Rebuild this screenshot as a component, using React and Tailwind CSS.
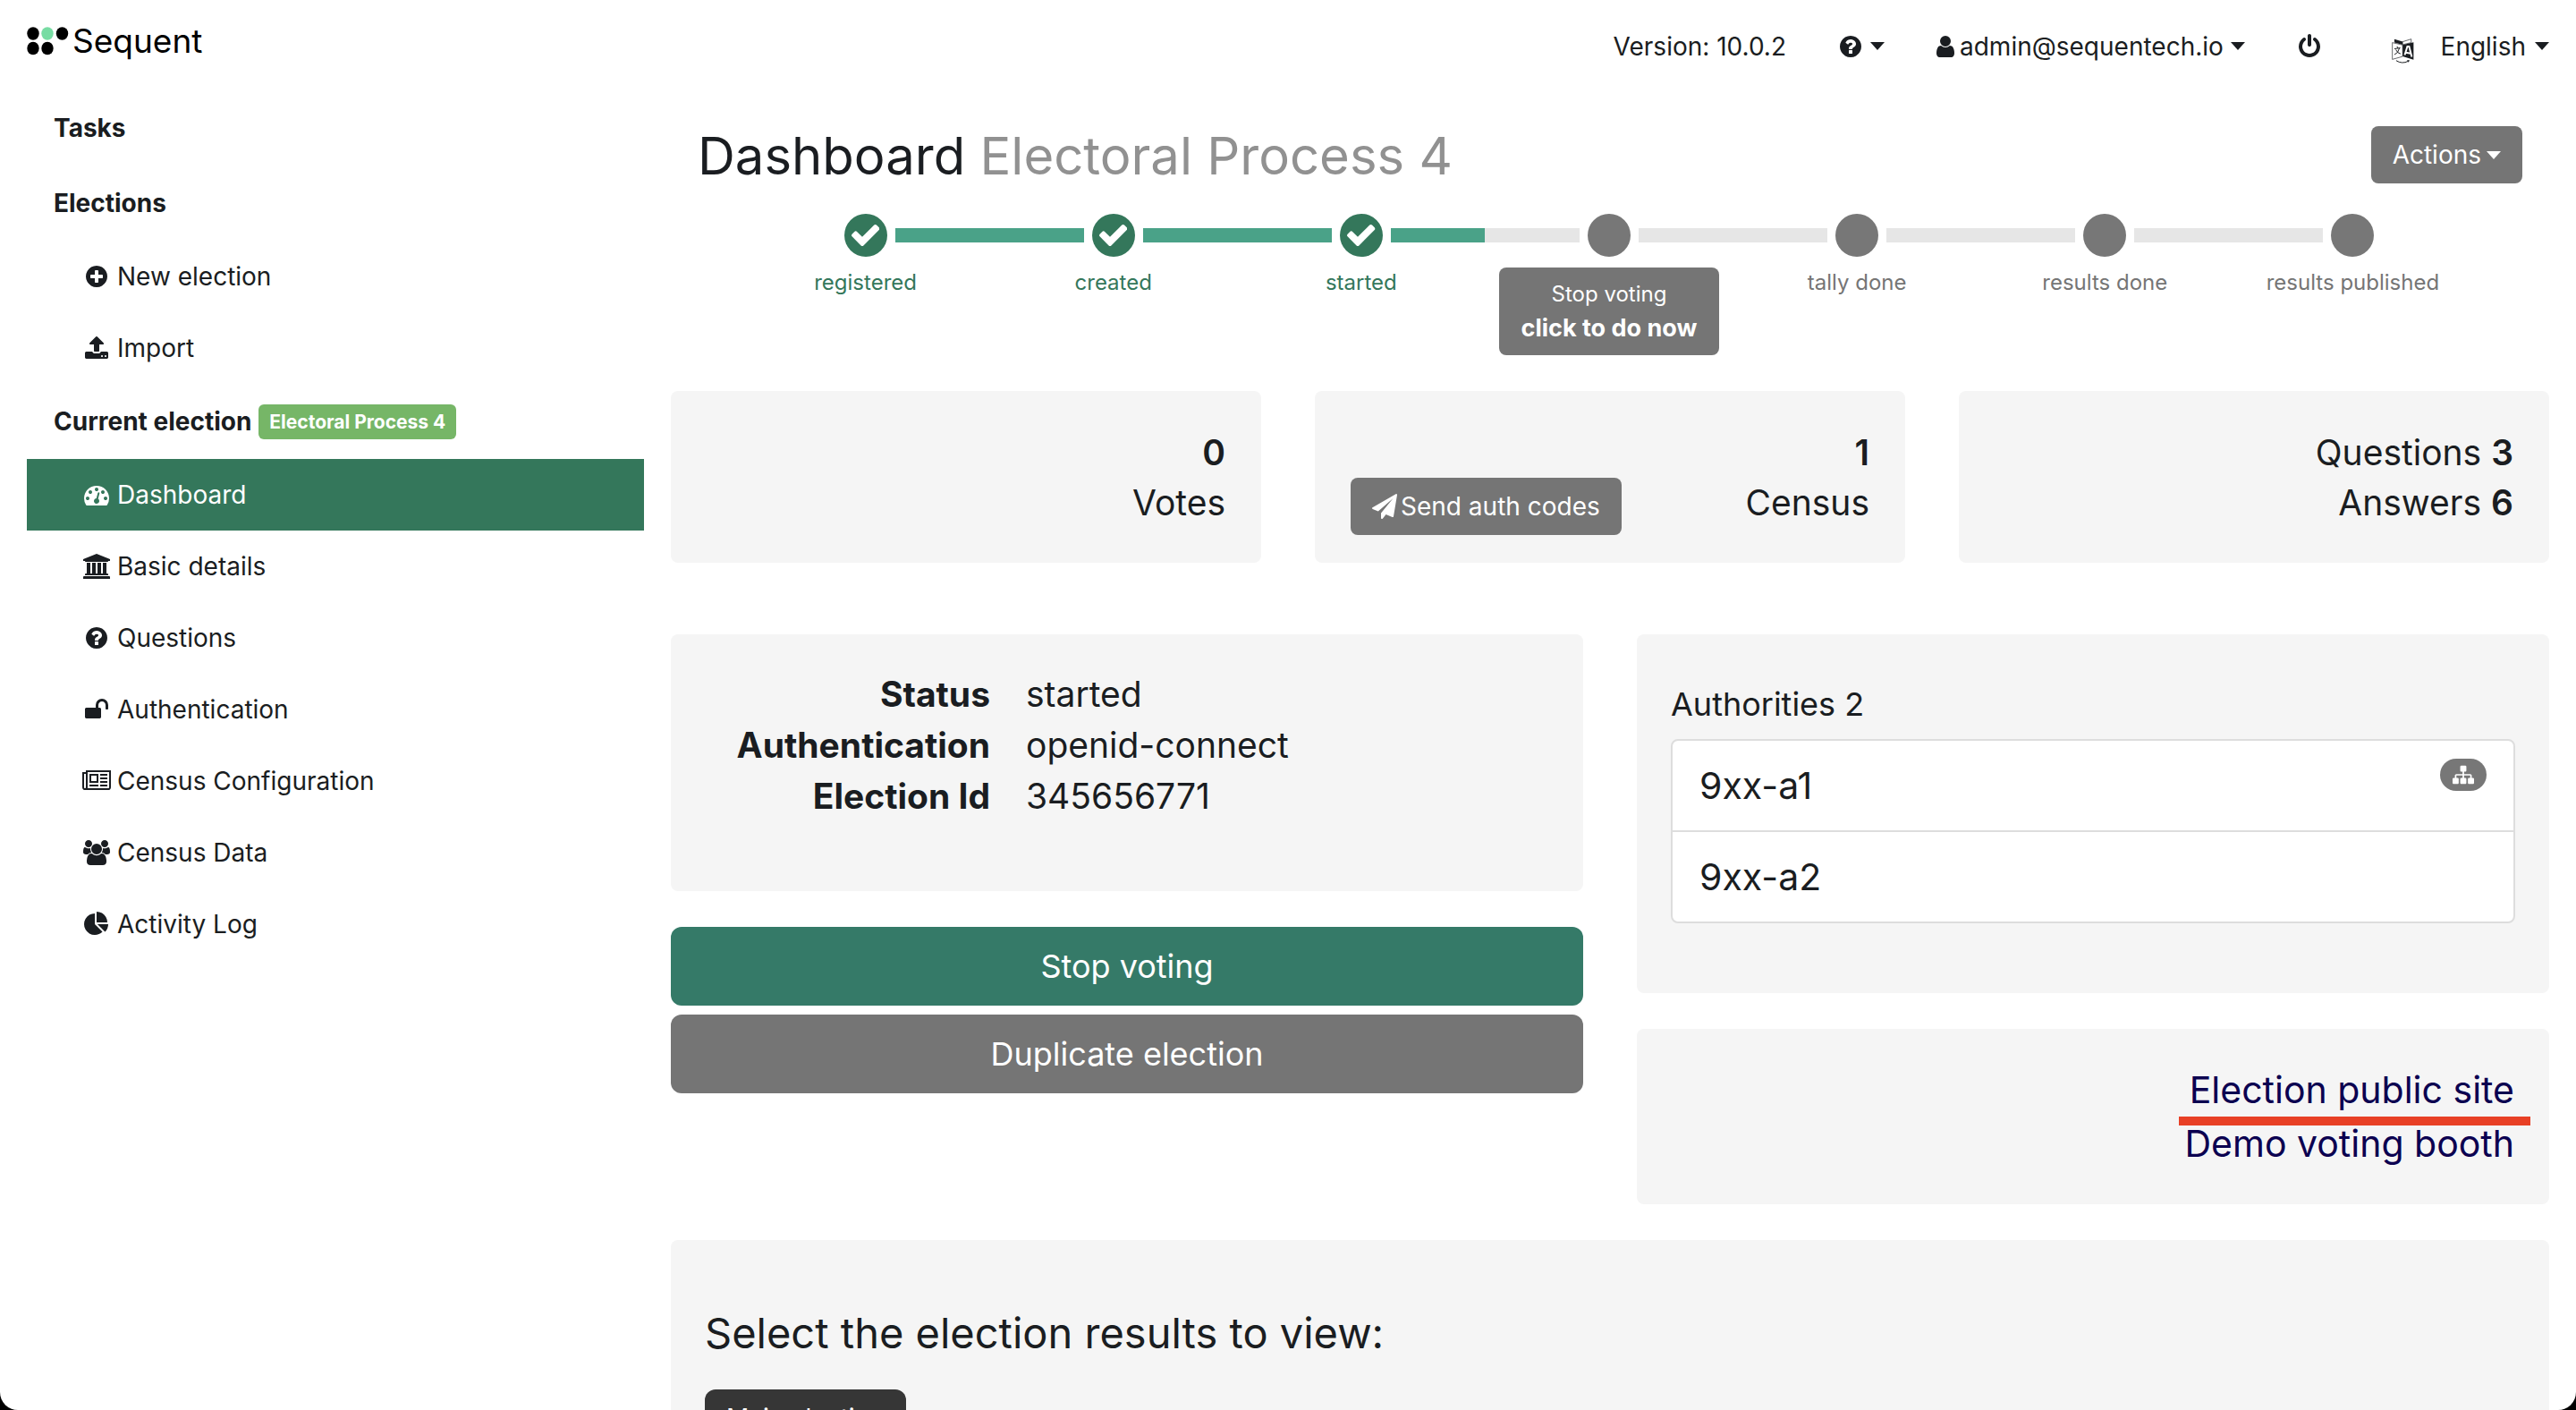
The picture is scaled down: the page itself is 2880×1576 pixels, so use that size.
import React from "react";

const ICONS = {
  plus: ["0 0 1792 1792", "M1344 960v-128q0-26-19-45t-45-19h-256v-256q0-26-19-45t-45-19h-128q-26 0-45 19t-19 45v256h-256q-26 0-45 19t-19 45v128q0 26 19 45t45 19h256v256q0 26 19 45t45 19h128q26 0 45-19t19-45v-256h256q26 0 45-19t19-45zm320-64q0 209-103 385.5t-279.5 279.5-385.5 103-385.5-103-279.5-279.5-103-385.5 103-385.5 279.5-279.5 385.5-103 385.5 103 279.5 279.5 103 385.5z"],
  upload: ["0 0 1792 1792", "M1344 1472q0-26-19-45t-45-19-45 19-19 45 19 45 45 19 45-19 19-45zm256 0q0-26-19-45t-45-19-45 19-19 45 19 45 45 19 45-19 19-45zm128-224v320q0 40-28 68t-68 28h-1472q-40 0-68-28t-28-68v-320q0-40 28-68t68-28h427q21 56 70.5 92t110.5 36h256q61 0 110.5-36t70.5-92h427q40 0 68 28t28 68zm-325-648q-17 40-59 40h-256v448q0 26-19 45t-45 19h-256q-26 0-45-19t-19-45v-448h-256q-42 0-59-40-17-39 14-69l448-448q18-19 45-19t45 19l448 448q31 30 14 69z"],
  gauge: ["0 0 1792 1792", "M384 1152q0-53-37.5-90.5t-90.5-37.5-90.5 37.5-37.5 90.5 37.5 90.5 90.5 37.5 90.5-37.5 37.5-90.5zm192-448q0-53-37.5-90.5t-90.5-37.5-90.5 37.5-37.5 90.5 37.5 90.5 90.5 37.5 90.5-37.5 37.5-90.5zm428 481l101-382q6-26-7.5-48.5t-38.5-29.5-48 6.5-30 39.5l-101 382q-60 5-107 43.5t-63 98.5q-20 77 20 146t117 89 146-20 89-117q16-60-6-117t-72-91zm660-33q0-53-37.5-90.5t-90.5-37.5-90.5 37.5-37.5 90.5 37.5 90.5 90.5 37.5 90.5-37.5 37.5-90.5zm-640-640q0-53-37.5-90.5t-90.5-37.5-90.5 37.5-37.5 90.5 37.5 90.5 90.5 37.5 90.5-37.5 37.5-90.5zm448 192q0-53-37.5-90.5t-90.5-37.5-90.5 37.5-37.5 90.5 37.5 90.5 90.5 37.5 90.5-37.5 37.5-90.5zm320 448q0 261-141 483-19 29-54 29h-1402q-35 0-54-29-141-221-141-483 0-182 71-348t191-286 286-191 348-71 348 71 286 191 191 286 71 348z"],
  bank: ["0 0 1920 1792", "M960 0l960 384v128h-128q0 26-20.5 45t-48.5 19h-1526q-28 0-48.5-19t-20.5-45h-128v-128zm-704 640h256v768h128v-768h256v768h128v-768h256v768h128v-768h256v768h59q28 0 48.5 19t20.5 45v64h-1664v-64q0-26 20.5-45t48.5-19h59v-768zm1595 960q28 0 48.5 19t20.5 45v128h-1920v-128q0-26 20.5-45t48.5-19h1782z"],
  question: ["0 0 1792 1792", "M1024 1376v-192q0-14-9-23t-23-9h-192q-14 0-23 9t-9 23v192q0 14 9 23t23 9h192q14 0 23-9t9-23zm256-672q0-88-55.5-163t-138.5-116-170-41q-243 0-371 213-15 24 8 42l132 100q7 6 19 6 16 0 25-12 53-68 86-92 34-24 86-24 48 0 85.5 26t37.5 59q0 38-20 61t-68 45q-63 28-115.5 86.5t-52.5 125.5v36q0 14 9 23t23 9h192q14 0 23-9t9-23q0-19 21.5-49.5t54.5-49.5q32-18 49-28.5t46-35 44.5-48 28-60.5 12.5-81zm384 192q0 209-103 385.5t-279.5 279.5-385.5 103-385.5-103-279.5-279.5-103-385.5 103-385.5 279.5-279.5 385.5-103 385.5 103 279.5 279.5 103 385.5z"],
  unlock: ["0 0 1792 1792", "M1728 576v256q0 26-19 45t-45 19h-64q-26 0-45-19t-19-45v-256q0-106-75-181t-181-75-181 75-75 181v192h96q40 0 68 28t28 68v576q0 40-28 68t-68 28h-960q-40 0-68-28t-28-68v-576q0-40 28-68t68-28h672v-192q0-185 131.5-316.5t316.5-131.5 316.5 131.5 131.5 316.5z"],
  news: ["0 0 2048 1792", "M1024 512h-384v384h384v-384zm128 640v128h-640v-128h640zm0-768v640h-640v-640h640zm640 768v128h-512v-128h512zm0-256v128h-512v-128h512zm0-256v128h-512v-128h512zm0-256v128h-512v-128h512zm-1536 960v-960h-128v960q0 26 19 45t45 19 45-19 19-45zm1664 0v-1088h-1536v1088q0 33-11 64h1483q26 0 45-19t19-45zm128-1216v1216q0 80-56 136t-136 56h-1664q-80 0-136-56t-56-136v-1088h256v-128h1792z"],
  users: ["64 0 1920 1792", "M657 896q-162 5-265 128h-134q-82 0-138-40.5t-56-118.5q0-353 124-353 6 0 43.5 21t97.5 42.5 119 21.5q67 0 133-23-5 37-5 66 0 139 81 256zm1071 637q0 120-73 189.5t-194 69.5h-874q-121 0-194-69.5t-73-189.5q0-53 3.5-103.5t14-109 26.5-108.5 43-97.5 62-81 85.5-53.5 111.5-20q10 0 43 21.5t73 48 107 48 135 21.5 135-21.5 107-48 73-48 43-21.5q61 0 111.5 20t85.5 53.5 62 81 43 97.5 26.5 108.5 14 109 3.5 103.5zm-1024-1277q0 106-75 181t-181 75-181-75-75-181 75-181 181-75 181 75 75 181zm704 384q0 159-112.5 271.5t-271.5 112.5-271.5-112.5-112.5-271.5 112.5-271.5 271.5-112.5 271.5 112.5 112.5 271.5zm576 225q0 78-56 118.5t-138 40.5h-134q-103-123-265-128 81-117 81-256 0-29-5-66 66 23 133 23 59 0 119-21.5t97.5-42.5 43.5-21q124 0 124 353zm-128-609q0 106-75 181t-181 75-181-75-75-181 75-181 181-75 181 75 75 181z"],
  pie: ["0 0 1792 1792", "M768 890l546 546q-106 108-247.5 168t-298.5 60q-209 0-385.5-103t-279.5-279.5-103-385.5 103-385.5 279.5-279.5 385.5-103v762zm187 6h773q0 157-60 298.5t-168 247.5zm709-128h-768v-768q209 0 385.5 103t279.5 279.5 103 385.5z"],
  user: ["256 0 1280 1792", "M1536 1399q0 109-62.5 187t-150.5 78h-854q-88 0-150.5-78t-62.5-187q0-85 8.5-160.5t31.5-152 58.5-131 94-89 134.5-34.5q131 128 313 128t313-128q76 0 134.5 34.5t94 89 58.5 131 31.5 152 8.5 160.5zm-256-887q0 159-112.5 271.5t-271.5 112.5-271.5-112.5-112.5-271.5 112.5-271.5 271.5-112.5 271.5 112.5 112.5 271.5z"],
  power: ["128 0 1536 1792", "M1664 896q0 156-61 298t-164 245-245 164-298 61-298-61-245-164-164-245-61-298q0-182 80.5-343t226.5-270q43-32 95.5-25t83.5 50q32 42 24.5 94.5t-49.5 84.5q-98 74-151.5 181t-53.5 228q0 104 40.5 198.5t109.5 163.5 163.5 109.5 198.5 40.5 198.5-40.5 163.5-109.5 109.5-163.5 40.5-198.5q0-121-53.5-228t-151.5-181q-42-32-49.5-84.5t24.5-94.5q31-43 84-50t95 25q146 109 226.5 270t80.5 343zm-640-768v640q0 52-38 90t-90 38-90-38-38-90v-640q0-52 38-90t90-38 90 38 38 90z"],
  plane: ["0 0 1792 1792", "M1764 11q33 24 27 64l-256 1536q-5 29-32 45-14 8-31 8-11 0-24-5l-453-185-242 295q-18 23-49 23-13 0-22-4-19-7-30.5-23.5t-11.5-36.5v-349l864-1059-1069 925-395-162q-37-14-40-55-2-40 32-59l1664-960q15-9 32-9 20 0 36 11z"],
  sitemap: ["0 0 1792 1792", "M1792 1248v320q0 40-28 68t-68 28h-320q-40 0-68-28t-28-68v-320q0-40 28-68t68-28h96v-192h-512v192h96q40 0 68 28t28 68v320q0 40-28 68t-68 28h-320q-40 0-68-28t-28-68v-320q0-40 28-68t68-28h96v-192h-512v192h96q40 0 68 28t28 68v320q0 40-28 68t-68 28h-320q-40 0-68-28t-28-68v-320q0-40 28-68t68-28h96v-192q0-52 38-90t90-38h512v-192h-96q-40 0-68-28t-28-68v-320q0-40 28-68t68-28h320q40 0 68 28t28 68v320q0 40-28 68t-68 28h-96v192h512q52 0 90 38t38 90v192h96q40 0 68 28t28 68z"],
  check: ["121 334 1550 1188", "M1671 566q0 40-28 68l-724 724-136 136q-28 28-68 28t-68-28l-136-136-362-362q-28-28-28-68t28-68l136-136q28-28 68-28t68 28l294 295 656-657q28-28 68-28t68 28l136 136q28 28 28 68z"],
};

function Icon({ name, className = "h-7" }) {
  const [viewBox, d] = ICONS[name];
  return (
    <svg viewBox={viewBox} className={`w-auto shrink-0 ${className}`} fill="currentColor" aria-hidden="true">
      <path d={d} />
    </svg>
  );
}

function Caret() {
  return (
    <svg viewBox="0 0 16 9" className="h-[9px] w-4 shrink-0" fill="currentColor" aria-hidden="true">
      <path d="M0 0h16L8 9z" />
    </svg>
  );
}

function TranslateIcon() {
  return (
    <svg viewBox="0 0 75 85" className="h-7 w-auto" aria-hidden="true">
      <path d="M9 2l28 9v10L9 14z" fill="#1a1d21" />
      <path d="M37 11l29-9v12L37 21z" fill="#fff" stroke="#1a1d21" strokeWidth="2" />
      <path d="M2 14l35 8v39L2 71z" fill="#fff" stroke="#1a1d21" strokeWidth="2" />
      <path d="M37 22l37-9v59l-37-11z" fill="#1a1d21" />
      <path d="M9 35l20-3M18 27l3 6M26 33q-4 17-17 22M14 38q5 12 16 14" fill="none" stroke="#1a1d21" strokeWidth="3" />
      <path d="M44 56l9-29h6l9 35M47 48l18 3" fill="none" stroke="#fff" strokeWidth="6" />
      <path d="M15 75q20 13 41 2" fill="none" stroke="#1a1d21" strokeWidth="3" />
      <path d="M52 73l9 1-5 7z" fill="#1a1d21" />
    </svg>
  );
}

function Logo() {
  return (
    <a href="#" className="flex items-center gap-1 text-[37px] leading-[48px] text-black">
      <svg viewBox="0 0 47 32" className="h-8 w-auto" aria-hidden="true">
        <ellipse cx="7" cy="7.5" rx="6.7" ry="7.3" />
        <ellipse cx="23" cy="7.5" rx="6.7" ry="7.3" fill="#77dca3" />
        <ellipse cx="39.5" cy="7.5" rx="6.7" ry="7.3" />
        <ellipse cx="7" cy="24" rx="6.7" ry="7.3" />
        <ellipse cx="23" cy="24" rx="6.7" ry="7.3" />
      </svg>
      Sequent
    </a>
  );
}

function NavItem({ icon, label, active }) {
  return (
    <a
      href="#"
      aria-current={active ? "page" : undefined}
      className={`flex h-20 items-center gap-[5px] pl-15 ${active ? "bg-[#34775b] text-white" : ""}`}
    >
      <span className="flex w-9 justify-center">
        <Icon name={icon} />
      </span>
      {label}
    </a>
  );
}

const CURRENT = [
  ["gauge", "Dashboard"],
  ["bank", "Basic details"],
  ["question", "Questions"],
  ["unlock", "Authentication"],
  ["news", "Census Configuration"],
  ["users", "Census Data"],
  ["pie", "Activity Log"],
];

function Sidebar() {
  return (
    <nav className="flex w-[690px] shrink-0 flex-col">
      <h2 className="flex h-21 items-center pl-[30px] font-bold">Tasks</h2>
      <h2 className="flex h-21 items-center pl-[30px] font-bold">Elections</h2>
      <NavItem icon="plus" label="New election" />
      <NavItem icon="upload" label="Import" />
      <h2 className="flex h-21 items-center gap-2 pl-[30px] font-bold">
        Current election
        <span className="rounded-md bg-[#76b667] px-3 text-[21px] leading-[39px] text-white">Electoral Process 4</span>
      </h2>
      {CURRENT.map(([icon, label]) => (
        <NavItem key={label} icon={icon} label={label} active={label === "Dashboard"} />
      ))}
    </nav>
  );
}

const STEPS = [
  ["registered", true],
  ["created", true],
  ["started", true],
  ["", false],
  ["tally done", false],
  ["results done", false],
  ["results published", false],
];

function Steps() {
  return (
    <ol className="mr-[81px] ml-[79px] mt-[34px] grid grid-cols-7">
      {STEPS.map(([label, done], i) => (
        <li key={i} className="flex flex-col items-center">
          <div className="flex w-full items-center gap-[9px]">
            <span className={`h-4 flex-1 ${i === 0 ? "" : done ? "bg-[#4aa288]" : "bg-[#e6e6e6]"}`} />
            <span className={`flex size-12 items-center justify-center rounded-full text-white ${done ? "bg-[#34775b]" : "bg-[#777777]"}`}>
              {done && <Icon name="check" className="h-6" />}
            </span>
            <span className={`h-4 flex-1 ${i === 6 ? "" : done ? "bg-[#4aa288]" : "bg-[#e6e6e6]"}`} />
          </div>
          {label ? (
            <span className={`mt-[13px] text-[24px] leading-8 whitespace-nowrap ${done ? "text-[#34775b]" : "text-[#757575]"}`}>{label}</span>
          ) : (
            <button className="mt-3 flex h-[98px] flex-col items-center justify-center rounded-lg bg-[#757575] px-[25px] leading-[38px] whitespace-nowrap text-white">
              <span className="text-[24px]">Stop voting</span>
              <strong className="text-[27px]">click to do now</strong>
            </button>
          )}
        </li>
      ))}
    </ol>
  );
}

export default function App() {
  return (
    <div className="h-screen overflow-hidden bg-black">
      <div className="h-full overflow-hidden rounded-b-[20px] bg-white px-[30px] font-['Inter',sans-serif] text-[28px] leading-10 text-[#1a1d21]">
        <header className="flex h-[101px] justify-between">
          <div className="pt-[22px]">
            <Logo />
          </div>
          <div className="flex items-center pt-0.5">
            <span>Version: 10.0.2</span>
            <button aria-label="Help" className="ml-[58px] flex items-center gap-2">
              <Icon name="question" />
              <Caret />
            </button>
            <button className="ml-[58px] flex items-center gap-1.5">
              <Icon name="user" />
              admin@sequentech.io
              <span className="ml-0.5"><Caret /></span>
            </button>
            <button aria-label="Log out" className="ml-[60px]">
              <Icon name="power" />
            </button>
            <button className="ml-20 flex items-center">
              <span className="mt-2.5"><TranslateIcon /></span>
              <span className="ml-[30px]">English</span>
              <span className="ml-2.5"><Caret /></span>
            </button>
          </div>
        </header>

        <div className="flex gap-[30px]">
          <Sidebar />
          <main className="min-w-0 flex-1 pt-10">
            <div className="flex items-center justify-between px-[30px]">
              <h1 className="pt-0.5 text-[58px] leading-[62px]">
                Dashboard <span className="text-[#919191]">Electoral Process 4</span>
              </h1>
              <button className="flex h-16 items-center gap-1.5 rounded-lg bg-[#757575] px-6 text-white">
                Actions <Caret />
              </button>
            </div>

            <Steps />

            <section className="mt-10 grid grid-cols-3 gap-15 text-right text-[39px] leading-14">
              <div className="rounded-lg bg-[#f5f5f5] px-10 pt-[41px] pb-[39px]">
                <strong className="block font-semibold">0</strong>
                Votes
              </div>
              <div className="flex items-end justify-between rounded-lg bg-[#f5f5f5] px-10 pt-[41px] pb-[39px]">
                <button className="-mb-2 flex h-16 items-center gap-1 rounded-lg bg-[#757575] px-6 text-[28px] leading-10 text-white">
                  <Icon name="plane" /> Send auth codes
                </button>
                <div>
                  <strong className="block font-semibold">1</strong>
                  Census
                </div>
              </div>
              <div className="rounded-lg bg-[#f5f5f5] px-10 pt-[41px] pb-[39px]">
                <div>Questions <strong className="font-semibold">3</strong></div>
                <div>Answers <strong className="font-semibold">6</strong></div>
              </div>
            </section>

            <div className="mt-20 grid grid-cols-2 items-start gap-15">
              <section>
                <dl className="grid grid-cols-[35%_1fr] gap-x-10 rounded-lg bg-[#f5f5f5] pt-[38px] pb-[78px] text-[39px] leading-[57px]">
                  <dt className="text-right font-bold">Status</dt>
                  <dd>started</dd>
                  <dt className="text-right font-bold">Authentication</dt>
                  <dd>openid-connect</dd>
                  <dt className="text-right font-bold">Election Id</dt>
                  <dd>345656771</dd>
                </dl>
                <button className="mt-10 h-22 w-full rounded-xl bg-[#357a68] text-[36px] text-white">Stop voting</button>
                <button className="mt-2.5 h-22 w-full rounded-xl bg-[#757575] text-[36px] text-white">Duplicate election</button>
              </section>

              <section className="flex flex-col gap-10">
                <div className="rounded-lg bg-[#f5f5f5] px-[38px] pt-[54px] pb-[78px]">
                  <h2 className="text-[36px] leading-12">Authorities 2</h2>
                  <ul className="mt-[15px] divide-y-2 divide-[#dddddd] rounded-lg border-2 border-[#dddddd] bg-white text-[41px] leading-15">
                    <li className="flex items-start justify-between px-[30px] py-5">
                      9xx-a1
                      <button aria-label="Authority details" className="flex h-9 w-[52px] items-center justify-center rounded-[18px] bg-[#777777] text-white">
                        <Icon name="sitemap" className="h-6" />
                      </button>
                    </li>
                    <li className="px-[30px] py-5">9xx-a2</li>
                  </ul>
                </div>
                <div className="flex flex-col items-end rounded-lg bg-[#f5f5f5] px-[39px] pt-[38px] pb-[38px] text-[41px] leading-15 text-[#0b0050]">
                  <a href="#" className="relative">
                    Election public site
                    <span className="absolute -right-[18px] -bottom-2.5 -left-3 h-2.5 bg-[#e84025]" />
                  </a>
                  <a href="#">Demo voting booth</a>
                </div>
              </section>
            </div>

            <section className="mt-10 rounded-lg bg-[#f5f5f5] px-[38px] pt-[75px] pb-20">
              <h2 className="text-[47px] leading-[58px]">Select the election results to view:</h2>
              <button className="mt-[34px] h-16 rounded-xl bg-[#363636] px-6 text-white">Main election</button>
            </section>
          </main>
        </div>
      </div>
    </div>
  );
}
